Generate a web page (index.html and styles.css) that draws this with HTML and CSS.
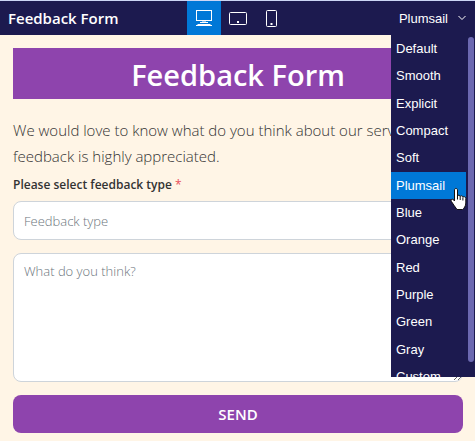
FILE: index.html
```html
<!DOCTYPE html>
<html lang="en">
<head>
    <meta charset="UTF-8">
    <meta name="viewport" content="width=device-width, initial-scale=1.0">
    <title>Feedback Form</title>
    <link rel="stylesheet" href="styles.css">
</head>
<body>
    <!-- Toolbar -->
    <header class="toolbar">
        <span class="toolbar-title">Feedback Form</span>

        <div class="devices">
            <button type="button" class="device-btn active" aria-label="Desktop">
                <svg width="18" height="17" viewBox="0 0 18 17" fill="none" stroke="currentColor">
                    <rect x="1.5" y="0.5" width="15" height="10"/>
                    <path d="M8 11v2M10 11v2M5 12.5h8M3 14.5h12M1 15.5h16M3.5 14l-2 2M14.5 14l2 2"/>
                </svg>
            </button>
            <button type="button" class="device-btn" aria-label="Tablet">
                <svg width="18" height="13" viewBox="0 0 18 13" fill="none" stroke="currentColor">
                    <rect x="0.5" y="0.5" width="17" height="12" rx="1"/>
                    <path d="M8 10h2" stroke-width="2"/>
                </svg>
            </button>
            <button type="button" class="device-btn" aria-label="Phone">
                <svg width="11" height="17" viewBox="0 0 11 17" fill="none" stroke="currentColor">
                    <rect x="0.5" y="0.5" width="10" height="16" rx="1"/>
                    <path d="M4.5 14h2" stroke-width="2"/>
                </svg>
            </button>
        </div>

        <div class="theme">
            <button type="button" class="theme-btn" aria-haspopup="true" aria-expanded="true">
                Plumsail
                <svg width="8" height="6" viewBox="0 0 8 6" fill="none" stroke="currentColor">
                    <path d="M0.5 1l3.5 3.5l3.5-3.5"/>
                </svg>
            </button>

            <div class="theme-menu">
                <ul class="theme-list">
                    <li><button type="button">Default</button></li>
                    <li><button type="button">Smooth</button></li>
                    <li><button type="button">Explicit</button></li>
                    <li><button type="button">Compact</button></li>
                    <li><button type="button">Soft</button></li>
                    <li><button type="button" class="selected">Plumsail</button></li>
                    <li><button type="button">Blue</button></li>
                    <li><button type="button">Orange</button></li>
                    <li><button type="button">Red</button></li>
                    <li><button type="button">Purple</button></li>
                    <li><button type="button">Green</button></li>
                    <li><button type="button">Gray</button></li>
                    <li><button type="button">Custom</button></li>
                </ul>
                <div class="scroll-thumb"></div>
                <svg class="cursor" width="18" height="22" viewBox="0 0 18 22">
                    <path d="M4.500 2c0-2 3-2 3 0v6c.3-1.300 2.700-1 2.700.5c.4-1.200 2.700-.8 2.700.7c.6-1 2.900-.5 2.900 1.200v4.600c0 3-1.800 5.500-3.300 6.500h-5.500c-2-2.500-3.500-5-5.700-8.200c-1-1.800 1-2.800 2.200-1.500l1 1.200z" fill="#fff" stroke="#111"/>
                    <path d="M7.500 8v3.500M10.200 8.500v3.500M12.900 9.500v3" fill="none" stroke="#111"/>
                </svg>
            </div>
        </div>
    </header>

    <!-- Form -->
    <form class="form">
        <h1>Feedback Form</h1>
        <p class="intro">We would love to know what do you think about our services. Your feedback is highly appreciated.</p>

        <label for="feedbackType">Please select feedback type <span class="required">*</span></label>
        <input type="text" id="feedbackType" class="field" placeholder="Feedback type">

        <textarea id="comment" class="field comment" placeholder="What do you think?" aria-label="What do you think?"></textarea>

        <button type="submit" class="submit-btn">SEND</button>
    </form>
</body>
</html>
```

FILE: styles.css
```css
* {
    margin: 0;
    padding: 0;
    box-sizing: border-box;
}

body {
    background: #fff5e6;
    color: #333;
    font-family: 'Open Sans', 'Noto Sans', sans-serif;
    overflow: hidden;
}

button,
input,
textarea {
    font-family: inherit;
}

/* Toolbar */
.toolbar {
    display: grid;
    grid-template-columns: 1fr auto 1fr;
    height: 35px;
    background: #1c1a4f;
    border-top: 1px solid #ccd6f5;
    color: #fff;
}

.toolbar-title {
    padding-left: 8px;
    font-size: 15px;
    font-weight: 600;
    line-height: 34px;
}

.devices {
    display: flex;
}

.device-btn {
    display: flex;
    align-items: center;
    justify-content: center;
    width: 34px;
    background: none;
    border: none;
    color: #fff;
    cursor: pointer;
}

.device-btn.active {
    background: #0078d7;
}

/* Theme dropdown */
.theme {
    position: relative;
    display: flex;
    justify-content: flex-end;
    font-family: 'Liberation Sans', Arial, sans-serif;
}

.theme-btn {
    display: flex;
    align-items: center;
    gap: 10px;
    padding-right: 9px;
    background: none;
    border: none;
    color: #fff;
    font-size: 13px;
    cursor: pointer;
}

.theme-menu {
    position: absolute;
    top: 100%;
    right: 0;
    width: 84px;
    height: 342px;
    background: #1c1a4f;
    overflow: hidden;
}

.theme-list {
    display: grid;
    grid-template-rows: repeat(13, 1fr);
    height: 355px;
    padding-right: 9px;
    list-style: none;
}

.theme-list li {
    display: grid;
}

.theme-list button {
    padding-left: 5px;
    background: none;
    border: none;
    color: #fff;
    font-size: 13px;
    text-align: left;
    cursor: pointer;
}

.theme-list .selected {
    background: #0078d7;
}

.scroll-thumb {
    position: absolute;
    top: 2px;
    right: 1px;
    width: 6px;
    height: 325px;
    background: #6b68b0;
    border-radius: 3px;
}

.cursor {
    position: absolute;
    top: 153px;
    right: 7px;
}

/* Form */
.form {
    display: flex;
    flex-direction: column;
    padding: 13px 12px 8px 13px;
}

h1 {
    background: #8e44ad;
    color: #fff;
    font-size: 29px;
    font-weight: 600;
    line-height: 53px;
    height: 51px;
    text-align: center;
}

.intro {
    margin-top: 18px;
    font-size: 15px;
    font-weight: 300;
    line-height: 26px;
}

label {
    margin-top: 6px;
    font-size: 12px;
    font-weight: 600;
    line-height: 20px;
}

.required {
    color: #e8505b;
    font-weight: 400;
}

.field {
    height: 39px;
    margin-top: 6px;
    padding: 0 10px;
    background: #fff;
    border: 1px solid #ced4da;
    border-radius: 8px;
    color: #333;
    font-size: 13px;
    font-weight: 300;
}

.field::placeholder {
    color: #6c757d;
}

.comment {
    height: 129px;
    margin-top: 13px;
    padding: 8px 10px;
    resize: vertical;
}

/* Submit Button */
.submit-btn {
    height: 38px;
    margin-top: 13px;
    background: #8e44ad;
    border: none;
    border-radius: 8px;
    color: #fff;
    font-size: 15px;
    font-weight: 600;
    cursor: pointer;
}
```
